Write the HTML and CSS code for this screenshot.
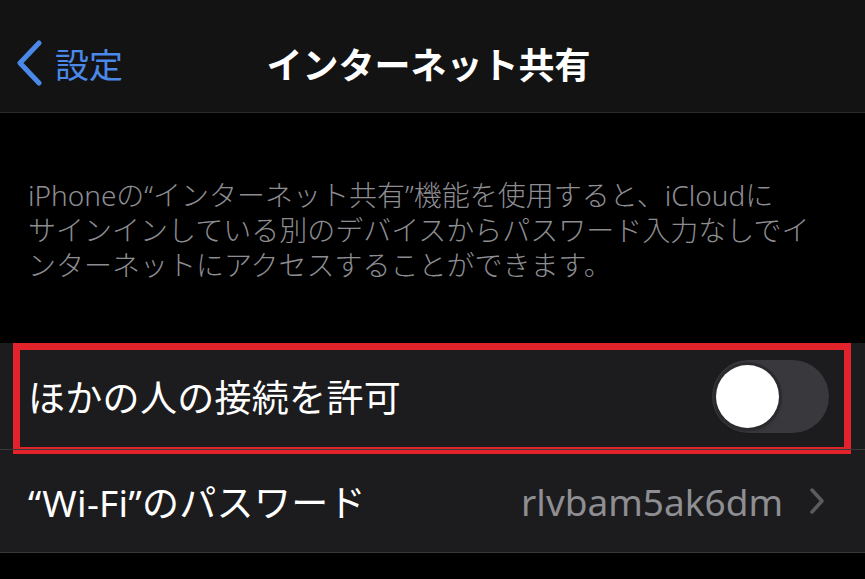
FILE: index.html
```html
<!DOCTYPE html>
<html lang="ja">
<head>
  <meta charset="UTF-8">
  <title>インターネット共有</title>
  <link rel="stylesheet" href="styles.css">
</head>
<body>

  <header class="navbar">
    <a class="back" href="#">
      <svg class="back-icon" width="28" height="46" viewBox="0 0 28 46">
        <path d="M24 3 L5 23 L24 43" fill="none" stroke="currentColor" stroke-width="5" stroke-linecap="round" stroke-linejoin="round"/>
      </svg>
      <span>設定</span>
    </a>
    <div class="title">インターネット共有</div>
    <div></div>
  </header>

  <p class="note">
    iPhoneの“インターネット共有”機能を使用すると、iCloudに<br>
    サインインしている別のデバイスからパスワード入力なしでイ<br>
    ンターネットにアクセスすることができます。
  </p>

  <div class="group">
    <div class="row row-toggle">
      <span class="label">ほかの人の接続を許可</span>
      <div class="switch"><div class="knob"></div></div>
      <div class="highlight"></div>
    </div>
    <div class="row row-password">
      <span class="label">“Wi-Fi”のパスワード</span>
      <div class="detail">
        <span class="value">rlvbam5ak6dm</span>
        <svg class="chevron" width="16" height="28" viewBox="0 0 16 28">
          <path d="M3 3 L13 14 L3 25" fill="none" stroke="currentColor" stroke-width="3.5" stroke-linecap="round" stroke-linejoin="round"/>
        </svg>
      </div>
    </div>
  </div>

</body>
</html>
```

FILE: styles.css
```css
body {
  margin: 0;
  width: 865px;
  height: 579px;
  overflow: hidden;
  background-color: #000;
  font-family: "Noto Sans", "Noto Sans CJK JP", sans-serif;
  color: #fff;
}

.navbar {
  height: 113px;
  box-sizing: border-box;
  padding: 14px 0 0 15px;
  background-color: #131313;
  border-bottom: 1px solid #2a2a2c;
  display: grid;
  grid-template-columns: 1fr auto 1fr;
  align-items: center;
}

.back {
  display: flex;
  align-items: center;
  gap: 12px;
  color: #4a89e8;
  font-size: 34px;
  text-decoration: none;
}

.back-icon {
  display: block;
}

.title {
  font-size: 36px;
  font-weight: 700;
  margin-right: 23px;
}

.note {
  margin: 0;
  height: 230px;
  box-sizing: border-box;
  padding: 65px 28px 0;
  font-size: 28px;
  line-height: 35px;
  color: #8d8d92;
  font-weight: 300;
}

.group {
  background-color: #1c1c1e;
  border-bottom: 1px solid #38383a;
}

.row {
  position: relative;
  display: flex;
  align-items: center;
  justify-content: space-between;
  padding: 0 36px 0 28px;
  box-sizing: border-box;
}

.row-toggle {
  height: 106px;
}

.row-password {
  height: 103px;
  border-top: 1px solid #38383a;
}

.label {
  font-size: 37px;
  letter-spacing: 0.3px;
}

.switch {
  width: 117px;
  height: 73px;
  box-sizing: border-box;
  padding: 5px 0 0 4px;
  border-radius: 37px;
  background-color: #39393d;
}

.knob {
  width: 63px;
  height: 63px;
  border-radius: 50%;
  background-color: #fff;
  box-shadow: 0 0 0 3px #2b2b2e, 0 2px 5px rgba(0, 0, 0, 0.4);
}

.highlight {
  position: absolute;
  top: 0;
  left: 13px;
  right: 14px;
  height: 111px;
  box-sizing: border-box;
  border: 7px solid #e3232c;
  pointer-events: none;
}

.detail {
  display: flex;
  align-items: center;
  gap: 26px;
  margin-right: 4px;
}

.value {
  font-size: 37px;
  color: #8e8e93;
}

.chevron {
  display: block;
  color: #5c5c60;
}
```
